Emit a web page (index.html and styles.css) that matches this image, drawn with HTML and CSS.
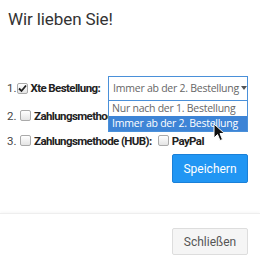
FILE: index.html
```html
<!DOCTYPE html>
<html lang="de">
<head>
  <meta charset="UTF-8" />
  <meta name="viewport" content="width=device-width, initial-scale=1.0"/>
  <title>Wir lieben Sie!</title>
  <link rel="stylesheet" href="styles.css">
</head>
<body>
  <div class="modal">
    <div class="modal-header">
      <h1>Wir lieben Sie!</h1>
    </div>

    <div class="modal-body">
      <div class="row first">
        <span class="num">1.</span>
        <span class="check checked">
          <svg width="9" height="9" viewBox="0 0 9 9"><path d="M1 4.5 L3.5 7 L8 1.5" fill="none" stroke="#222" stroke-width="1.8"/></svg>
        </span>
        <label>Xte Bestellung:</label>
        <div class="select-wrap">
          <div class="select">
            <span>Immer ab der 2. Bestellung</span>
            <span class="caret"></span>
          </div>
          <ul class="options">
            <li>Nur nach der 1. Bestellung</li>
            <li class="active">Immer ab der 2. Bestellung</li>
          </ul>
          <svg class="cursor" width="13" height="19" viewBox="0 0 13 19"><path d="M1 1 L1 15 L4.5 11.5 L7 17.5 L9.5 16.5 L7 10.5 L11.5 10.5 Z" fill="#111" stroke="#fff" stroke-width="1"/></svg>
        </div>
      </div>
      <div class="row">
        <span class="num">2.</span>
        <span class="check"></span>
        <label>Zahlungsmethode:</label>
      </div>
      <div class="row">
        <span class="num">3.</span>
        <span class="check"></span>
        <label>Zahlungsmethode (HUB):</label>
        <span class="check paypal"></span>
        <label>PayPal</label>
      </div>

      <div class="actions">
        <button class="btn-primary">Speichern</button>
      </div>
    </div>

    <div class="modal-footer">
      <button class="btn-default">Schließen</button>
    </div>
  </div>
</body>
</html>
```

FILE: styles.css
```css
* { box-sizing: border-box; }
body {
  margin: 0;
  font-family: Roboto, "Liberation Sans", sans-serif;
  background: #fff;
  color: #333;
}
.modal { width: 260px; }
.modal-header { padding: 9px 8px 0; height: 73px; }
.modal-header h1 {
  margin: 0;
  font-size: 17px;
  font-weight: 400;
  color: #333;
  letter-spacing: -0.1px;
}
.modal-body { padding: 0 12px 0 7px; }
.row {
  display: flex;
  align-items: center;
  height: 25px;
  font-size: 11.5px;
  white-space: nowrap;
}
.row.first { height: 30px; }
.num { width: 13px; color: #444; }
.check {
  width: 11px;
  height: 11px;
  border: 1px solid #aaa;
  border-radius: 2px;
  background: linear-gradient(#fff, #e4e4e4);
  margin-right: 3px;
  display: flex;
  align-items: center;
  justify-content: center;
}
.check.paypal { margin-left: 6px; }
label { font-weight: bold; color: #222; letter-spacing: -0.6px; }
.select-wrap { position: relative; margin-left: 8px; }
.select {
  width: 140px;
  height: 25px;
  border: 1px solid #4a90d9;
  display: flex;
  align-items: center;
  padding: 0 4px;
  font-family: "Open Sans", sans-serif;
  font-size: 10.5px;
  letter-spacing: -0.25px;
  color: #666;
  background: #fff;
}
.caret {
  margin-left: 2px;
  border-left: 3.5px solid transparent;
  border-right: 3.5px solid transparent;
  border-top: 4px solid #555;
}
.options {
  position: absolute;
  top: 25px;
  left: 0;
  width: 140px;
  margin: 0;
  padding: 0;
  list-style: none;
  border: 1px solid #4a90d9;
  border-top: none;
  background: #fff;
  font-family: "Open Sans", sans-serif;
  font-size: 10.5px;
  letter-spacing: -0.25px;
  color: #666;
  z-index: 2;
}
.options li { height: 15px; line-height: 15px; padding-left: 3px; }
.options li.active { background: #3d84d6; color: #fff; }
.cursor { position: absolute; left: 105px; top: 47px; z-index: 3; }
.actions {
  display: flex;
  justify-content: flex-end;
  margin-top: 1px;
  height: 59px;
}
.btn-primary {
  width: 76px;
  height: 29px;
  border: 1px solid #1a80d8;
  border-radius: 2px;
  background: #2196f3;
  color: #fff;
  font-family: Roboto, sans-serif;
  font-size: 12px;
}
.modal-footer {
  border-top: 1px solid #eee;
  box-shadow: 0 -1px 3px rgba(0,0,0,0.04);
  display: flex;
  justify-content: flex-end;
  padding: 14px 12px 0 0;
}
.btn-default {
  width: 76px;
  height: 27px;
  border: 1px solid #ddd;
  border-radius: 2px;
  background: #f5f5f5;
  color: #555;
  font-family: Roboto, sans-serif;
  font-size: 12px;
}
```
